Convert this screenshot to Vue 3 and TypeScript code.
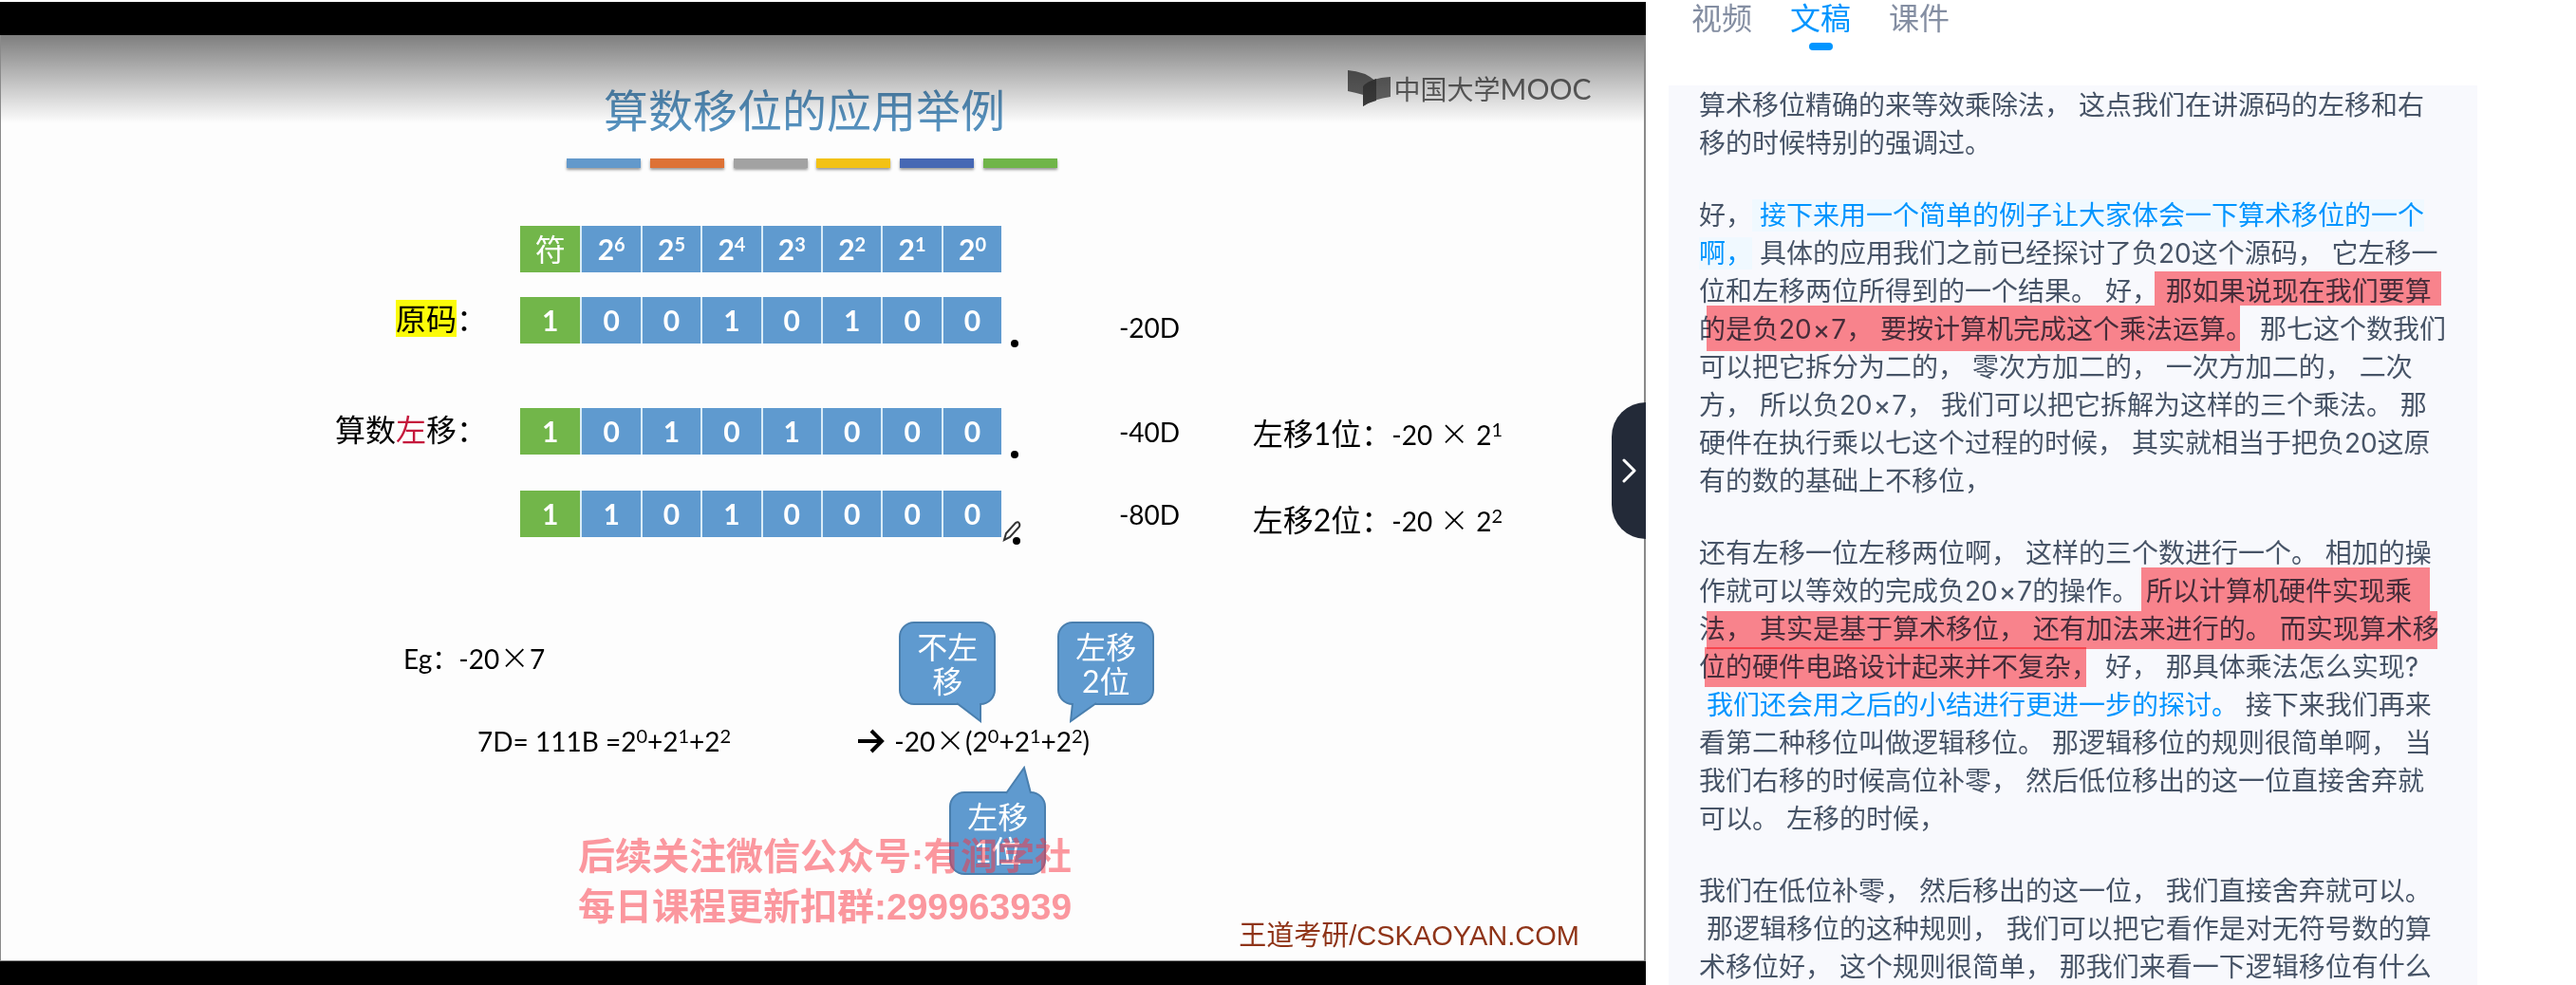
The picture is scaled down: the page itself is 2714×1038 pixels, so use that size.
<script setup lang="ts">
import { ref } from 'vue'

interface Register {
  key: string
  bits: number[]
  value: string
  steps?: number
}

interface Piece {
  text: string
  kind?: 'active' | 'link'
}

const tabs = ['视频', '文稿', '课件']
const activeTab = ref('文稿')

const accents = ['#6399cb', '#dd7236', '#a2a2a2', '#f3c214', '#4668b4', '#70b549']
const weights = [6, 5, 4, 3, 2, 1, 0]

const registers: Register[] = [
  { key: 'source', bits: [1, 0, 0, 1, 0, 1, 0, 0], value: '-20D' },
  { key: 'shift1', bits: [1, 0, 1, 0, 1, 0, 0, 0], value: '-40D', steps: 1 },
  { key: 'shift2', bits: [1, 1, 0, 1, 0, 0, 0, 0], value: '-80D', steps: 2 },
]

const paragraphs: Piece[][][] = [
  [
    [{ text: '算术移位精确的来等效乘除法， 这点我们在讲源码的左移和右' }],
    [{ text: '移的时候特别的强调过。' }],
  ],
  [
    [{ text: '好，' }, { text: ' 接下来用一个简单的例子让大家体会一下算术移位的一个', kind: 'active' }],
    [{ text: '啊，', kind: 'active' }, { text: ' 具体的应用我们之前已经探讨了负20这个源码， 它左移一' }],
    [{ text: '位和左移两位所得到的一个结果。 好， 那如果说现在我们要算' }],
    [{ text: '的是负20×7， 要按计算机完成这个乘法运算。 那七这个数我们' }],
    [{ text: '可以把它拆分为二的， 零次方加二的， 一次方加二的， 二次' }],
    [{ text: '方， 所以负20×7， 我们可以把它拆解为这样的三个乘法。 那' }],
    [{ text: '硬件在执行乘以七这个过程的时候， 其实就相当于把负20这原' }],
    [{ text: '有的数的基础上不移位，' }],
  ],
  [
    [{ text: '还有左移一位左移两位啊， 这样的三个数进行一个。 相加的操' }],
    [{ text: '作就可以等效的完成负20×7的操作。 所以计算机硬件实现乘' }],
    [{ text: '法， 其实是基于算术移位， 还有加法来进行的。 而实现算术移' }],
    [{ text: '位的硬件电路设计起来并不复杂， 好， 那具体乘法怎么实现?' }],
    [{ text: ' 我们还会用之后的小结进行更进一步的探讨。', kind: 'link' }, { text: ' 接下来我们再来' }],
    [{ text: '看第二种移位叫做逻辑移位。 那逻辑移位的规则很简单啊， 当' }],
    [{ text: '我们右移的时候高位补零， 然后低位移出的这一位直接舍弃就' }],
    [{ text: '可以。 左移的时候，' }],
  ],
  [
    [{ text: '我们在低位补零， 然后移出的这一位， 我们直接舍弃就可以。' }],
    [{ text: ' 那逻辑移位的这种规则， 我们可以把它看作是对无符号数的算' }],
    [{ text: '术移位好， 这个规则很简单， 那我们来看一下逻辑移位有什么' }],
  ],
]

// keeps the multiplication sign as its own part, so that it can be spaced
const splitSigns = (text: string): string[] => text.split(/(×)/)

const markers = ['m1', 'm2', 'm3', 'm4', 'm5']
</script>

<template>
  <div class="app">
    <section class="player">
      <div class="slide">
        <header class="slide-head">
          <h1>算数移位的应用举例</h1>
          <div class="brand">
            <svg width="45" height="38" viewBox="0 0 45 38" aria-hidden="true">
              <path d="M0 0Q18 1 30 12V31Q16 25 0 22Z" fill="#666" />
              <path d="M16 17Q24 8 45 7V28Q28 30 16 38Z" fill="#6c6c6c" />
              <path d="M16 17Q20 12 30 9V32Q22 34 16 38Z" fill="#404040" />
            </svg>
            <span>中国大学<b>MOOC</b></span>
          </div>
        </header>

        <div class="accents">
          <i v-for="c in accents" :key="c" :style="{ background: c }"></i>
        </div>

        <table class="registers">
          <thead>
            <tr>
              <td></td>
              <th class="bit sign" scope="col">符</th>
              <th v-for="w in weights" :key="w" class="bit" scope="col">2<sup>{{ w }}</sup></th>
            </tr>
          </thead>
          <tbody>
            <tr v-for="r in registers" :key="r.key" :class="r.key">
              <th class="label" scope="row">
                <template v-if="r.key === 'source'"><mark>原码</mark>：</template>
                <template v-else-if="r.key === 'shift1'">算数<em>左</em>移：</template>
              </th>
              <td v-for="(b, i) in r.bits" :key="i" class="bit" :class="{ sign: i === 0 }">{{ b }}</td>
              <td class="point"><i></i></td>
              <td class="value">{{ r.value }}</td>
              <td class="note">
                <template v-if="r.steps">左移{{ r.steps }}位：<span class="term">-20 <span class="times">×</span> 2<sup>{{ r.steps }}</sup></span></template>
              </td>
            </tr>
          </tbody>
        </table>
        <svg class="pen" width="22" height="24" viewBox="0 0 22 24" aria-hidden="true">
          <path d="M2 21L4 14L14 3Q17 1 18 4Q19 6 17 8L8 18Z" fill="none" stroke="#333" stroke-width="2" />
        </svg>

        <p class="example">Eg：-20<span class="times">×</span>7</p>

        <div class="derivation">
          <p>7D= 111B =2<sup>0</sup>+2<sup>1</sup>+2<sup>2</sup></p>
          <div class="expansion">
            <svg class="arrow" width="28" height="26" viewBox="0 0 28 26" aria-hidden="true">
              <path d="M0 13H25M14 2L25 13L14 24" fill="none" stroke="#000" stroke-width="4" />
            </svg>
            <p>-20<span class="times">×</span>(2<sup>0</sup>+2<sup>1</sup>+2<sup>2</sup>)</p>
            <div class="callout c0">
              不左<br>移
              <svg width="30" height="22" viewBox="0 0 30 22" aria-hidden="true"><path d="M1 1L26 20V1" /></svg>
            </div>
            <div class="callout c2">
              左移<br>2位
              <svg width="30" height="22" viewBox="0 0 30 22" aria-hidden="true"><path d="M3 1L1 20L28 1" /></svg>
            </div>
            <div class="callout c1">
              左移<br>1位
              <svg width="30" height="30" viewBox="0 0 30 30" aria-hidden="true"><path d="M1 29L20 2L27 29" /></svg>
            </div>
          </div>
        </div>

        <p class="credit">王道考研/CSKAOYAN.COM</p>
        <p class="watermark">后续关注微信公众号:有润学社<br>每日课程更新扣群:299963939</p>
      </div>

      <button class="collapse" type="button" aria-label="收起">
        <svg width="16" height="28" viewBox="0 0 16 28" aria-hidden="true">
          <path d="M2 3L13 14L2 25" fill="none" stroke="#fff" stroke-width="3" stroke-linecap="round" stroke-linejoin="round" />
        </svg>
      </button>
    </section>

    <aside class="side">
      <nav class="tabs">
        <button
          v-for="t in tabs"
          :key="t"
          type="button"
          :class="{ on: t === activeTab }"
          @click="activeTab = t"
        >{{ t }}</button>
      </nav>
      <article class="transcript">
        <p v-for="(p, pi) in paragraphs" :key="pi">
          <span v-for="(line, li) in p" :key="li" class="line"><span
            v-for="(piece, k) in line"
            :key="k"
            :class="piece.kind"
          ><span
            v-for="(part, n) in splitSigns(piece.text)"
            :key="n"
            :class="{ mul: part === '×' }"
          >{{ part }}</span></span></span>
        </p>
        <i v-for="m in markers" :key="m" class="marker" :class="m"></i>
      </article>
    </aside>
  </div>
</template>

<style>
body {
  background: #fff;
  overflow: hidden;
}
</style>

<style scoped>
.app {
  display: flex;
  height: 100vh;
  overflow: hidden;
  font-family: Lato, "Noto Sans CJK SC", sans-serif;
}
p,
h1 {
  margin: 0;
  font-weight: 400;
}
sup {
  font-size: 20px;
  line-height: 0;
  vertical-align: 9px;
}

/* player */
.player {
  position: relative;
  flex: 1734;
  min-width: 0;
  margin-top: 2px;
  padding-top: 35px;
  background: #000;
}
.slide {
  position: relative;
  background: #fdfdfd;
  border: solid #8a8a8a;
  border-width: 0 2px 1px 1px;
  font-size: 28px;
  color: #000;
}
.slide::before {
  content: "";
  position: absolute;
  inset: 0 0 auto;
  height: 93px;
  background: linear-gradient(rgba(0, 0, 0, 0.5), rgba(0, 0, 0, 0));
}
.slide-head {
  display: grid;
  grid-template-columns: 636fr 785fr 313fr;
  padding-top: 36px;
}
.slide-head h1 {
  grid-column: 2;
  padding-top: 8px;
  font-size: 47px;
  line-height: 70px;
  color: #5590bd;
  white-space: nowrap;
}
.brand {
  display: flex;
  gap: 4px;
  height: 40px;
  align-items: center;
  font-size: 28px;
  color: #666;
  white-space: nowrap;
}
.brand b {
  font-size: 30px;
  font-weight: 400;
}
.accents {
  display: flex;
  justify-content: space-between;
  width: 517px;
  margin: 16px 0 61px 596px;
}
.accents i {
  width: 78px;
  height: 10px;
  box-shadow: 0 2px 3px rgba(0, 0, 0, 0.4);
}

.registers {
  display: block;
}
.registers thead,
.registers tbody {
  display: block;
}
.registers tr {
  display: grid;
  grid-template-columns: minmax(0, 1096fr) repeat(8, minmax(0, 127fr)) minmax(0, 248fr) minmax(0, 282fr) minmax(0, 826fr);
  height: 49px;
  align-items: center;
}
.registers th,
.registers td {
  padding: 0;
  white-space: nowrap;
  line-height: 34px;
}
.registers .source {
  margin-top: 26px;
}
.registers .shift1 {
  margin-top: 68px;
}
.registers .shift2 {
  margin-top: 38px;
}
.registers .label {
  padding: 0 35px 4px 0;
  font-size: 32px;
  font-weight: 400;
  text-align: right;
}
.label mark {
  background: #fbfb0a;
  color: inherit;
}
.label em {
  font-style: normal;
  color: #c5183c;
}
.registers .bit {
  height: 49px;
  line-height: 49px;
  border-left: 2px solid #d9ecf7;
  background: #5f9acf;
  color: #fff;
  font-size: 30px;
  font-weight: 700;
  text-align: center;
}
.registers .sign {
  border-left: 0;
  background: #72b64a;
}
.registers th.sign {
  font-size: 32px;
  font-weight: 400;
}
.point {
  align-self: end;
}
.point i {
  display: block;
  width: 8px;
  height: 8px;
  margin: 0 0 -4px 10px;
  border-radius: 4px;
  background: #000;
}
.shift2 .point i {
  margin: 0 0 -8px 12px;
}
.source .value,
.shift2 .note {
  align-self: end;
}
.registers .note {
  padding-top: 6px;
  font-size: 32px;
}
.term {
  font-size: 28px;
}
.times {
  font-family: "DejaVu Sans", sans-serif;
  font-size: 38px;
  font-weight: 200;
  line-height: 0;
}
.pen {
  position: absolute;
  left: 1055px;
  top: 511px;
}

.example {
  margin: 108px 0 47px 424px;
  line-height: 40px;
}
.derivation {
  display: grid;
  grid-template-columns: 402fr 829fr;
  margin-left: 29%;
  line-height: 40px;
  white-space: nowrap;
}
.expansion {
  position: relative;
  display: flex;
  align-items: center;
  gap: 10px;
}
.callout {
  position: absolute;
  width: 102px;
  height: 88px;
  box-sizing: border-box;
  padding-top: 7px;
  border: 2px solid #4a7fae;
  border-radius: 16px;
  background: #5f9acf;
  color: #fff;
  font-size: 32px;
  line-height: 36px;
  text-align: center;
}
.callout svg {
  position: absolute;
  fill: #5f9acf;
  stroke: #4a7fae;
  stroke-width: 2;
}
.c0 {
  left: 43px;
  top: -106px;
}
.c0 svg {
  left: 58px;
  top: 83px;
}
.c2 {
  left: 210px;
  top: -106px;
}
.c2 svg {
  left: 11px;
  top: 83px;
}
.c1 {
  left: 96px;
  top: 73px;
}
.c1 svg {
  left: 57px;
  top: -29px;
}
.credit {
  margin: 165px 68px 6px 0;
  font: 29px/40px "Liberation Sans", "Noto Sans CJK SC", sans-serif;
  color: #8f3418;
  text-align: right;
}
.watermark {
  position: absolute;
  left: 608px;
  top: 839px;
  font: 700 39px/53px "Liberation Sans", "Noto Sans CJK SC", sans-serif;
  color: rgba(250, 50, 64, 0.5);
  white-space: nowrap;
}
.collapse {
  position: absolute;
  right: 0;
  top: 422px;
  display: flex;
  align-items: center;
  width: 36px;
  height: 144px;
  padding: 0 0 0 11px;
  border: 0;
  border-radius: 36px 0 0 36px;
  background: #232a38;
}

/* side panel */
.side {
  flex: 980;
  min-width: 0;
  display: flex;
  flex-direction: column;
}
.tabs {
  display: flex;
  gap: 40px;
  height: 90px;
  padding-left: 48px;
}
.tabs button {
  position: relative;
  height: 54px;
  padding: 0 0 20px;
  border: 0;
  background: none;
  font: 32px/34px "Noto Sans CJK SC", sans-serif;
  color: #848ea2;
}
.tabs .on {
  color: #0095ff;
}
.tabs .on::after {
  content: "";
  position: absolute;
  left: 20px;
  bottom: 1px;
  width: 25px;
  height: 8px;
  border-radius: 4px;
  background: #0095ff;
}
.transcript {
  position: relative;
  flex: 1;
  min-height: 0;
  overflow: hidden;
  margin: 0 104px 0 24px;
  padding: 1px 0 0 32px;
  background: #f8f9fd;
  font: 28px/40px Inter, "Noto Sans CJK SC", sans-serif;
  color: #475467;
}
.transcript p {
  margin-bottom: 36px;
}
.line {
  display: block;
  height: 40px;
  white-space: pre;
}
.mul {
  padding: 0 1px;
}
.active {
  background: #f0f9ff;
  color: #0095ff;
}
.link {
  color: #0095ff;
}
.marker {
  position: absolute;
  background: #ff868d;
  mix-blend-mode: multiply;
}
.m1 {
  left: 512px;
  top: 196px;
  width: 302px;
  height: 36px;
}
.m2 {
  left: 40px;
  top: 232px;
  width: 562px;
  height: 48px;
}
.m3 {
  left: 498px;
  top: 508px;
  width: 304px;
  height: 46px;
}
.m4 {
  left: 40px;
  top: 554px;
  width: 770px;
  height: 40px;
}
.m5 {
  left: 38px;
  top: 592px;
  width: 402px;
  height: 42px;
}
</style>
